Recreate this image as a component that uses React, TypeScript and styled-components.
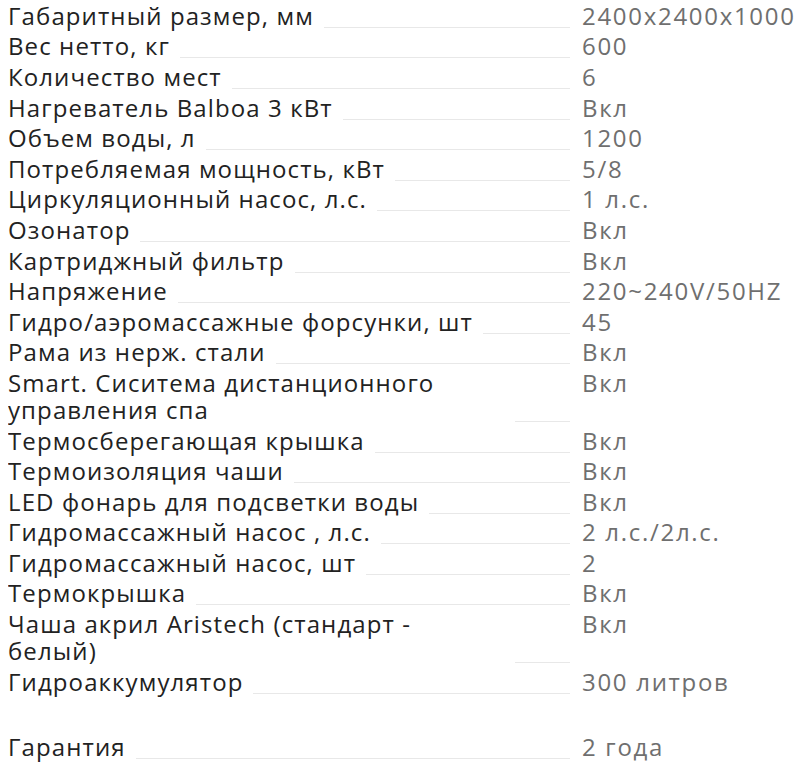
import styled, {createGlobalStyle} from "styled-components";

const GlobalStyle = createGlobalStyle`
  body {
    margin: 0 8px;
    background: #fff;
    font-family: "Open Sans", "Liberation Sans", sans-serif;
  }
`;

const SpecList = styled.div`
  display: flex;
  flex-direction: column;
  width: 796px;
`;

const Row = styled.div`
  display: grid;
  grid-template-columns: 562px 1fr;
  column-gap: 12px;
  padding: 1.8px 0;
  font-size: 24px;
  line-height: 27px;
`;

const LabelCell = styled.div`
  display: flex;
  align-items: flex-end;
`;

const Label = styled.span`
  flex: 0 1 auto;
  color: #222;
  letter-spacing: 1.1px;
`;

/* line that runs from the end of the label to the value column */
const Leader = styled.span`
  flex: 1 0 55px;
  margin: 0 0 1px 10px;
  border-bottom: 1px solid #e8e8e8;
`;

const Value = styled.div`
  color: #6f6f6f;
  letter-spacing: 1.7px;
`;

const Spacer = styled.div`
  height: 35px;
`;

type Spec = { name: string, value: string } | null;

const specs: Spec[] = [
    {name: "Габаритный размер, мм", value: "2400x2400x1000"},
    {name: "Вес нетто, кг", value: "600"},
    {name: "Количество мест", value: "6"},
    {name: "Нагреватель Balboa 3 кВт", value: "Вкл"},
    {name: "Объем воды, л", value: "1200"},
    {name: "Потребляемая мощность, кВт", value: "5/8"},
    {name: "Циркуляционный насос, л.с.", value: "1 л.с."},
    {name: "Озонатор", value: "Вкл"},
    {name: "Картриджный фильтр", value: "Вкл"},
    {name: "Напряжение", value: "220~240V/50HZ"},
    {name: "Гидро/аэромассажные форсунки, шт", value: "45"},
    {name: "Рама из нерж. стали", value: "Вкл"},
    {name: "Smart. Сиситема дистанционного управления спа", value: "Вкл"},
    {name: "Термосберегающая крышка", value: "Вкл"},
    {name: "Термоизоляция чаши", value: "Вкл"},
    {name: "LED фонарь для подсветки воды", value: "Вкл"},
    {name: "Гидромассажный насос , л.с.", value: "2 л.с./2л.с."},
    {name: "Гидромассажный насос, шт", value: "2"},
    {name: "Термокрышка", value: "Вкл"},
    {name: "Чаша акрил Aristech (стандарт - белый)", value: "Вкл"},
    {name: "Гидроаккумулятор", value: "300 литров"},
    null,
    {name: "Гарантия", value: "2 года"},
];

const App = () => {
    return (
        <>
            <GlobalStyle/>
            <SpecList>
                {specs.map((spec, i) => spec ? (
                    <Row key={i}>
                        <LabelCell>
                            <Label>{spec.name}</Label>
                            <Leader/>
                        </LabelCell>
                        <Value>{spec.value}</Value>
                    </Row>
                ) : <Spacer key={i}/>)}
            </SpecList>
        </>
    )
}

export default App;
